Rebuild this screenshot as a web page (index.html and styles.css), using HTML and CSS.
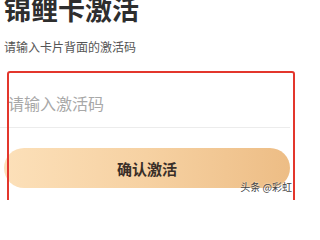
FILE: index.html
```html
<!DOCTYPE html>
<html lang="zh">
<head>
<meta charset="utf-8">
<link rel="stylesheet" href="styles.css">
</head>
<body>
<div class="page">
  <h1 class="title">锦鲤卡激活</h1>
  <p class="subtitle">请输入卡片背面的激活码</p>
  <div class="field">
    <input class="code-input" type="text" placeholder="请输入激活码">
  </div>
  <button class="confirm">确认激活</button>
  <div class="mark"></div>
  <div class="watermark">头条 @彩虹</div>
</div>
</body>
</html>
```
FILE: styles.css
```css
html, body {
  margin: 0;
  padding: 0;
  background: #ffffff;
  overflow: hidden;
}
body {
  width: 300px;
  height: 200px;
  font-family: "Noto Sans CJK SC", "Noto Sans", sans-serif;
}
.page {
  position: relative;
  width: 300px;
  height: 200px;
  padding: 0 10px 0 4px;
  box-sizing: border-box;
  display: flex;
  flex-direction: column;
}
.title {
  margin: -8px 0 0 0;
  font-size: 27px;
  line-height: 34px;
  font-weight: 700;
  color: #2e2e2e;
  letter-spacing: 0;
}
.subtitle {
  margin: 13px 0 0 0;
  font-size: 12px;
  line-height: 16px;
  color: #555;
}
.field {
  margin-top: 36px;
  margin-left: -4px;
  border-bottom: 1px solid #ececec;
  padding: 0 0 12px 0;
}
.code-input {
  display: block;
  width: 100%;
  border: none;
  outline: none;
  padding: 0 0 0 8px;
  margin: 0;
  font-family: "Noto Sans CJK SC", sans-serif;
  font-size: 16px;
  line-height: 24px;
  height: 24px;
  color: #333;
  background: transparent;
}
.code-input::placeholder {
  color: #a8a8a8;
}
.confirm {
  margin-top: 20px;
  height: 40px;
  width: 286px;
  border: none;
  border-radius: 20px;
  background: linear-gradient(90deg, #fce0b9 0%, #f6d1a2 50%, #edbd85 100%);
  font-family: "Noto Sans CJK SC", sans-serif;
  font-size: 15px;
  font-weight: 700;
  color: #3a2f28;
  padding: 0;
}
.mark {
  position: absolute;
  left: 7px;
  top: 71px;
  width: 288px;
  height: 160px;
  border: 2px solid #e3362c;
  border-radius: 3px;
  box-sizing: border-box;
}
.watermark {
  position: absolute;
  right: 8px;
  top: 181px;
  font-size: 10px;
  line-height: 12px;
  color: #444;
  text-shadow: 0 0 2px #fff;
}
```
